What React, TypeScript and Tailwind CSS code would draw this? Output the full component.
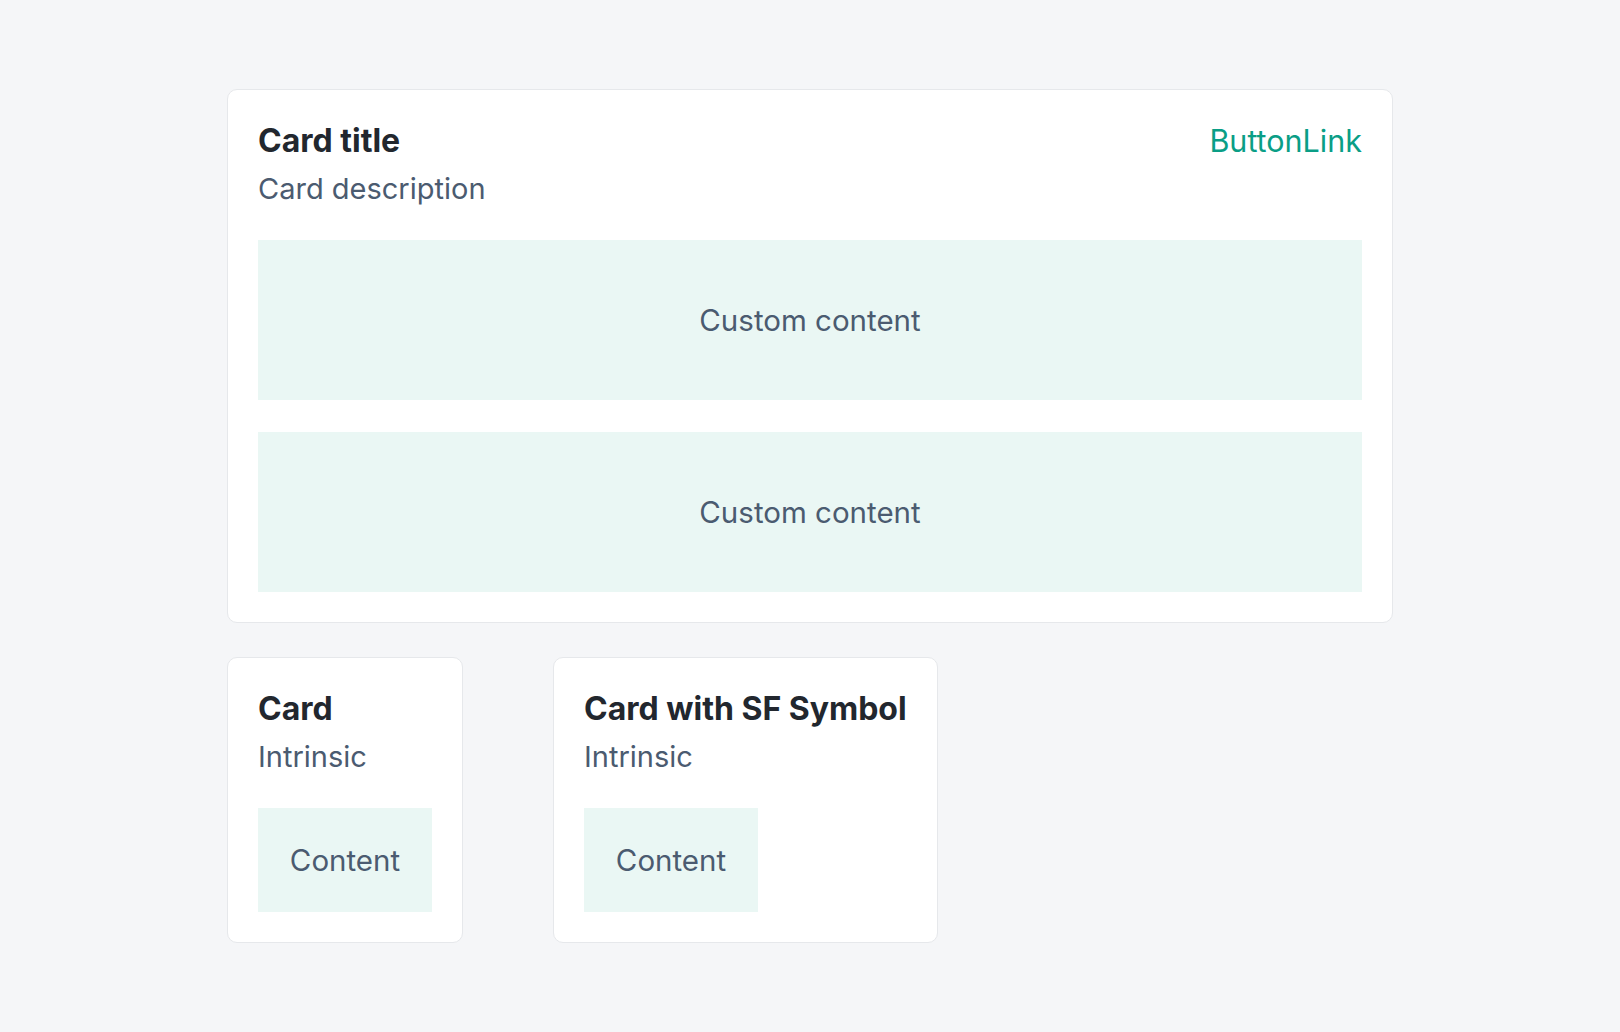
const font = { fontFamily: 'Inter, "Noto Sans", sans-serif' };

function Header({ title, description, action }: { title: string; description: string; action?: string }) {
  return (
    <div className="flex items-start justify-between gap-6">
      <div className="flex flex-col">
        <h2 className="text-[32px] leading-[41px] font-bold text-[#22272e] whitespace-nowrap">{title}</h2>
        <p className="mt-[10px] text-[29px] leading-[36px] text-[#4b5b70]">{description}</p>
      </div>
      {action && (
        <button className="text-[30.5px] leading-[42px] text-[#0a9e86]">{action}</button>
      )}
    </div>
  );
}

function Block({ label, wide }: { label: string; wide?: boolean }) {
  return (
    <div
      className={
        wide
          ? "h-[160px] flex items-center justify-center bg-[#eaf7f4] text-[29.5px] text-[#4b5b70]"
          : "w-[174px] h-[104px] flex items-center justify-center bg-[#eaf7f4] text-[29.5px] text-[#4b5b70]"
      }
    >
      {label}
    </div>
  );
}

export default function App() {
  return (
    <div className="min-h-screen bg-[#f5f6f8] pt-[89px]" style={font}>
      <div className="w-[1166px] mx-auto flex flex-col gap-[34px]">
        <section className="bg-white border border-[#e6e8eb] rounded-[10px] p-[30px]">
          <Header title="Card title" description="Card description" action="ButtonLink" />
          <div className="mt-[33px] flex flex-col gap-8">
            <Block label="Custom content" wide />
            <Block label="Custom content" wide />
          </div>
        </section>

        <div className="flex items-start gap-[90px]">
          <section className="bg-white border border-[#e6e8eb] rounded-[10px] p-[30px]">
            <Header title="Card" description="Intrinsic" />
            <div className="mt-[33px]">
              <Block label="Content" />
            </div>
          </section>
          <section className="bg-white border border-[#e6e8eb] rounded-[10px] p-[30px]">
            <Header title="Card with SF Symbol" description="Intrinsic" />
            <div className="mt-[33px]">
              <Block label="Content" />
            </div>
          </section>
        </div>
      </div>
    </div>
  );
}
